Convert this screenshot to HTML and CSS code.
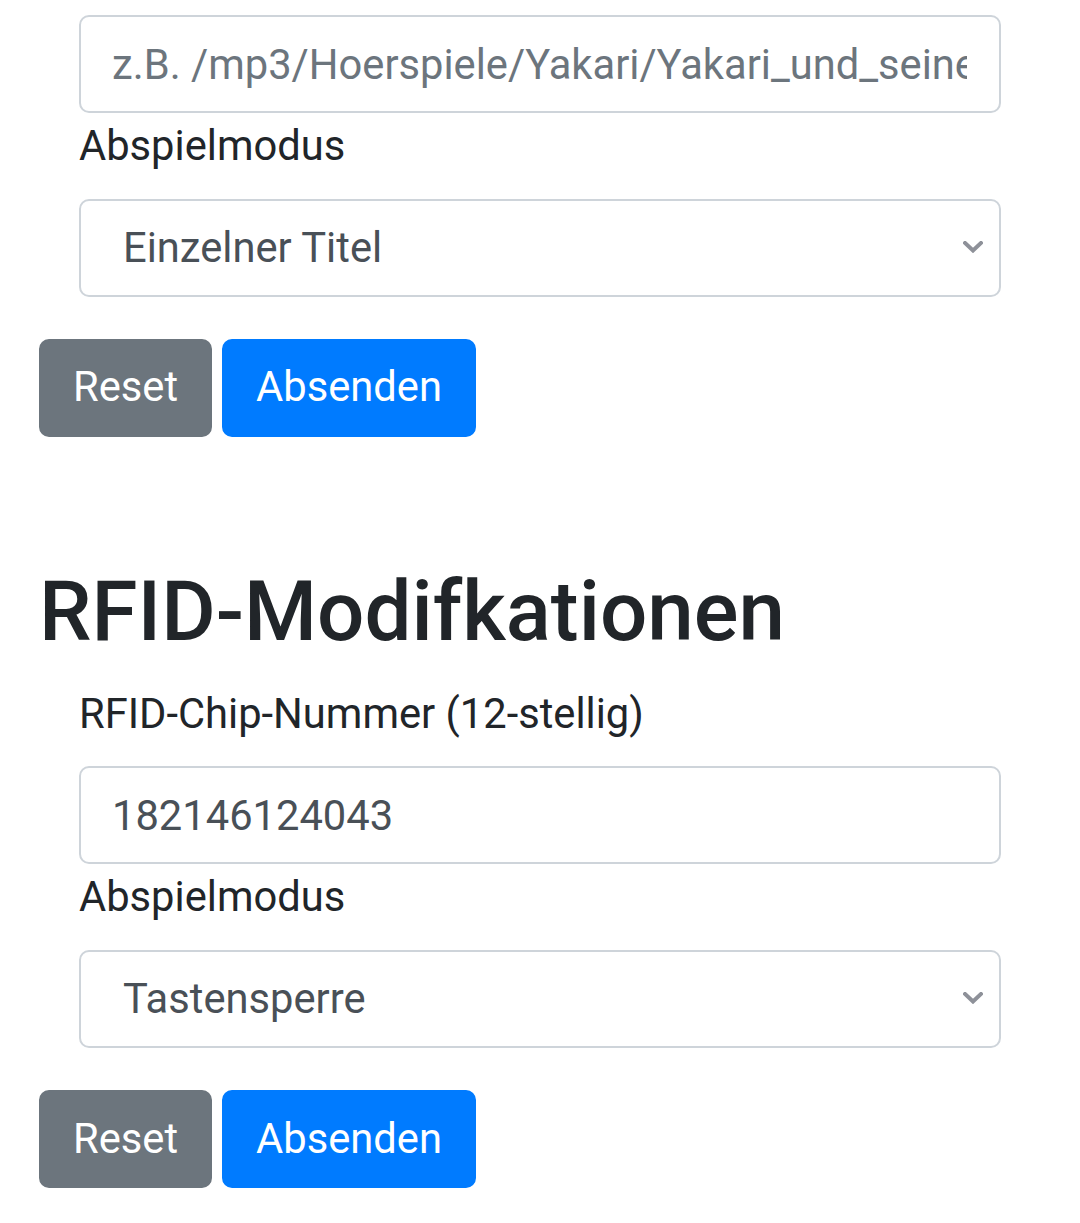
FILE: index.html
```html
<!DOCTYPE html>
<html lang="de">
<head>
<meta charset="utf-8">
<title>RFID</title>
<link rel="stylesheet" href="styles.css">
</head>
<body>
<div class="container">
  <form class="form">
    <div class="fields">
      <input class="form-control first" type="text" placeholder="z.B. /mp3/Hoerspiele/Yakari/Yakari_und_seine_Freunde">
      <label class="label">Abspielmodus</label>
      <div class="select-wrap">
        <select class="custom-select">
          <option>Einzelner Titel</option>
        </select>
        <svg class="chevron" width="20" height="12" viewBox="0 0 20 12"><path d="M2 2 L10 9.5 L18 2" fill="none" stroke="#8e9199" stroke-width="4" stroke-linecap="square"/></svg>
      </div>
    </div>
    <div class="buttons">
      <button type="reset" class="btn btn-secondary">Reset</button>
      <button type="submit" class="btn btn-primary">Absenden</button>
    </div>
  </form>

  <h2 class="heading">RFID-Modifkationen</h2>
  <form class="form">
    <div class="fields">
      <label class="label">RFID-Chip-Nummer (12-stellig)</label>
      <input class="form-control" type="text" value="182146124043">
      <label class="label">Abspielmodus</label>
      <div class="select-wrap">
        <select class="custom-select">
          <option>Tastensperre</option>
        </select>
        <svg class="chevron" width="20" height="12" viewBox="0 0 20 12"><path d="M2 2 L10 9.5 L18 2" fill="none" stroke="#8e9199" stroke-width="4" stroke-linecap="square"/></svg>
      </div>
    </div>
    <div class="buttons">
      <button type="reset" class="btn btn-secondary">Reset</button>
      <button type="submit" class="btn btn-primary">Absenden</button>
    </div>
  </form>
</div>
</body>
</html>
```

FILE: styles.css
```css
html, body {
  margin: 0;
  padding: 0;
  background: #fff;
}
body {
  font-family: Roboto, "Noto Sans", "Liberation Sans", sans-serif;
  font-size: 41.7px;
  line-height: 1.5;
  color: #212529;
}
.container {
  padding: 0 39px;
}
.form {
  margin: 0;
}
.fields {
  padding: 0 40px 0 40px;
  display: flex;
  flex-direction: column;
}
.form-control {
  display: block;
  box-sizing: border-box;
  width: 100%;
  height: 98px;
  margin: 0;
  padding: 0 32px 0 31px;
  font-family: inherit;
  font-size: 41.7px;
  color: #495057;
  background: #fff;
  border: 2px solid #ced4da;
  border-radius: 10px;
  outline: none;
  text-overflow: clip;
}
.form-control::placeholder {
  color: #6c757d;
  opacity: 1;
  text-overflow: clip;
}
.first {
  margin-top: 15px;
}
.label {
  display: block;
  margin: 2px 0 21px;
  line-height: 1.5;
}
.select-wrap {
  position: relative;
}
.custom-select {
  display: block;
  box-sizing: border-box;
  width: 100%;
  height: 98px;
  margin: 0;
  padding: 0 60px 0 42px;
  font-family: inherit;
  font-size: 41.7px;
  color: #495057;
  background: #fff;
  border: 2px solid #ced4da;
  border-radius: 10px;
  -webkit-appearance: none;
  appearance: none;
  outline: none;
}
.chevron {
  position: absolute;
  right: 18px;
  top: 42px;
  pointer-events: none;
}
.buttons {
  display: flex;
  gap: 10px;
  margin-top: 42px;
}
.btn {
  height: 98px;
  padding: 0 32px;
  font-family: inherit;
  font-size: 41.7px;
  line-height: 1.5;
  color: #fff;
  border: 2px solid transparent;
  border-radius: 10px;
  cursor: pointer;
}
.btn-secondary {
  background: #6c757d;
  border-color: #6c757d;
}
.btn-primary {
  background: #007bff;
  border-color: #007bff;
}
.heading {
  margin: 125px 0 21px;
  font-size: 83.5px;
  font-weight: 500;
  line-height: 1.2;
  color: #212529;
}
.heading + .form .label:first-child {
  margin-top: 0;
}
```
